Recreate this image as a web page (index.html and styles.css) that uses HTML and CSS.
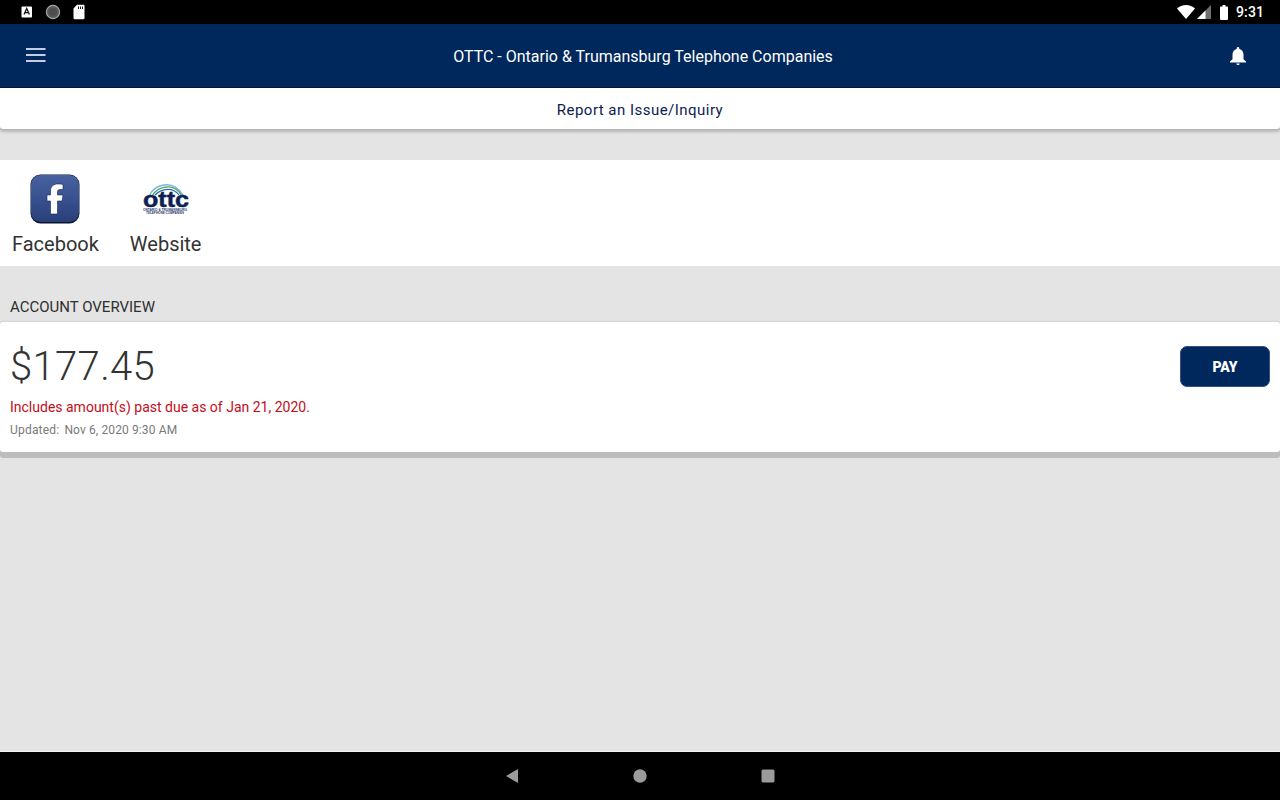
FILE: index.html
```html
<!DOCTYPE html>
<html lang="en">
<head>
<meta charset="utf-8">
<title>OTTC</title>
<link rel="stylesheet" href="styles.css">
</head>
<body>
<div class="screen">
  <div class="statusbar">
    <div class="status-left">
      <svg width="12" height="12" viewBox="0 0 12 12"><rect x="0.5" y="0.5" width="10.5" height="11" rx="1" fill="#fff"/><path d="M3 8.5 5.700 2.500 8.400 8.500M4 6.700h3.400" fill="none" stroke="#111" stroke-width="1.300"/></svg>
      <svg width="16" height="16" viewBox="0 0 16 16"><circle cx="8" cy="8" r="6.600" fill="#595959" stroke="#a8a8a8" stroke-width="1.200"/><circle cx="8" cy="8" r="3.800" fill="#4c4c4c"/></svg>
      <svg width="12" height="16" viewBox="0 0 12 16"><path d="M4 .8h6.500a1 1 0 0 1 1 1V14a1.300 1.300 0 0 1-1.300 1.300H1.800A1.300 1.300 0 0 1 .5 14V4.500Z" fill="#fff"/><path d="M5 2.500h1v2.600H5zM7 2.500h1v2.600H7zM9 2.500h1v2.600H9z" fill="#222"/></svg>
    </div>
    <div class="status-right">
      <svg class="s-wifi" width="18" height="14" viewBox="0 0 18 14"><path d="M0 3.400C2.400 1.300 5.600 0 9 0s6.600 1.300 9 3.400L9 14Z" fill="#fff"/></svg>
      <svg class="s-signal" width="14" height="14" viewBox="0 0 14 14"><path d="M14 0V14H0Z" fill="#6f6f6f"/><path d="M8.500 5.500V14H0Z" fill="#fff"/></svg>
      <svg class="s-batt" width="8" height="15" viewBox="0 0 8 15"><path d="M2.500 0h3v1.500H7a1 1 0 0 1 1 1V14a1 1 0 0 1-1 1H1a1 1 0 0 1-1-1V2.500a1 1 0 0 1 1-1h1.500Z" fill="#fff"/></svg>
      <span class="clock">9:31</span>
    </div>
  </div>

  <header class="appbar">
    <svg class="menu" width="20" height="14" viewBox="0 0 20 14"><path d="M0 1h19.500M0 7h19.500M0 13h19.500" stroke="#c5cde0" stroke-width="2"/></svg>
    <h1 class="title">OTTC - Ontario &amp; Trumansburg Telephone Companies</h1>
    <svg class="bell" width="16" height="18" viewBox="0 0 16 18"><path d="M8 0a1.300 1.300 0 0 1 1.300 1.300v.8C12 2.800 13.500 5 13.500 7.800v4.400L16 14.600v.9H0v-.9l2.500-2.400V7.800C2.500 5 4 2.800 6.700 2.100v-.8A1.300 1.300 0 0 1 8 0ZM6.300 16.400h3.400A1.700 1.700 0 0 1 8 18a1.700 1.700 0 0 1-1.700-1.600Z" fill="#fff"/></svg>
  </header>

  <div class="report">Report an Issue/Inquiry</div>

  <section class="links">
    <div class="link">
      <svg width="50" height="50" viewBox="0 0 50 50">
        <defs><linearGradient id="fbg" x1="0" y1="0" x2="0" y2="1"><stop offset="0" stop-color="#47629f"/><stop offset=".55" stop-color="#36508e"/><stop offset="1" stop-color="#2a3f78"/></linearGradient></defs>
        <rect x=".5" y=".5" width="49" height="49" rx="10" fill="#0d1830"/>
        <rect x="1" y="1" width="48" height="47" rx="9.500" fill="url(#fbg)"/>
        <path d="M20.500 40V27H17V21h3.500V17C20.500 12.500 23.500 10 28 10c2 0 4 .2 5 .4v5.100h-3c-2 0-2.500 1-2.500 2.500v3H33l-1 6h-4.500v13Z" fill="#fff" stroke="#14224d" stroke-width=".6"/>
      </svg>
      <span class="link-label">Facebook</span>
    </div>
    <div class="link link-web">
      <svg width="50" height="50" viewBox="0 0 50 50">
        <path d="M8 22C13 11 31 4 42 21" fill="none" stroke="#7fb2dc" stroke-width="1.300"/>
        <path d="M11 22C17 12 33 8 41 22" fill="none" stroke="#57a86d" stroke-width="1.300"/>
        <path d="M14 21C21 14 32 13 38 21" fill="none" stroke="#2d6fb0" stroke-width="1.200"/>
        <text class="logo-word" x="2" y="33" textLength="46" lengthAdjust="spacingAndGlyphs">ottc</text>
        <text class="logo-small" x="2" y="36.500" textLength="44" lengthAdjust="spacingAndGlyphs">ONTARIO &amp; TRUMANSBURG</text>
        <text class="logo-small" x="5" y="39.500" textLength="38" lengthAdjust="spacingAndGlyphs">TELEPHONE COMPANIES</text>
      </svg>
      <span class="link-label">Website</span>
    </div>
  </section>

  <div class="section-label">ACCOUNT OVERVIEW</div>

  <section class="card">
    <div class="card-main">
      <div class="amount">$177.45</div>
      <div class="pastdue">Includes amount(s) past due as of Jan 21, 2020.</div>
      <div class="updated"><span class="updated-label">Updated:</span><span>Nov 6, 2020 9:30 AM</span></div>
    </div>
    <button class="pay">PAY</button>
  </section>

  <div class="spacer"></div>

  <nav class="navbar">
    <svg width="14" height="14" viewBox="0 0 14 14"><path d="M13 0V14L1 7Z" fill="#9b9b9b"/></svg>
    <svg width="14" height="14" viewBox="0 0 14 14"><circle cx="7" cy="7" r="6.700" fill="#9b9b9b"/></svg>
    <svg width="14" height="14" viewBox="0 0 14 14"><rect x=".5" y=".5" width="13" height="13" rx="1.500" fill="#9b9b9b"/></svg>
  </nav>
</div>
</body>
</html>
```

FILE: styles.css
```css
* { box-sizing: border-box; }
html, body { margin: 0; height: 100%; }
body { font-family: Roboto, "Liberation Sans", sans-serif; background: #e4e4e4; }
.screen { width: 1280px; height: 800px; display: flex; flex-direction: column; overflow: hidden; background: #e4e4e4; }

.statusbar { height: 24px; flex: none; background: #000; display: flex; justify-content: space-between; align-items: center; padding: 0 16px 0 21px; }
.status-left { display: flex; align-items: center; gap: 12px; }
.status-right { display: flex; align-items: center; }
.s-signal { margin-left: 2px; }
.s-batt { margin-left: 9px; }
.clock { color: #fff; font-size: 14px; font-weight: 500; margin-left: 8px; letter-spacing: .1px; }

.appbar { height: 64px; flex: none; background: #00285c; border-bottom: 1px solid #001433; display: flex; align-items: center; padding: 0 34px 0 26px; }
.menu { flex: none; margin-top: -2px; }
.title { flex: 1; margin: 0; padding: 1px 0 0 10px; text-align: center; color: #fff; font-size: 16px; font-weight: 400; }
.bell { flex: none; margin-top: 1px; }

.report { height: 41px; flex: none; padding-top: 2px; background: #fff; display: flex; align-items: center; justify-content: center; color: #0b1c4f; font-size: 15px; letter-spacing: .47px; border-radius: 0 0 3px 3px; box-shadow: 0 1px 0 #b4b4b4, 0 2px 0 #bebebe, 0 3px 3px rgba(0,0,0,.2); }

.links { margin-top: 31px; height: 106px; flex: none; background: #fff; display: flex; padding: 14px 0 0 12px; }
.link { display: flex; flex-direction: column; align-items: center; }
.link-web { margin-left: 31px; }
.link-label { font-size: 20px; line-height: 24px; margin-top: 8px; color: #333; }
.logo-word { font-family: "Liberation Sans", sans-serif; font-size: 22px; font-weight: 700; fill: #0d1f55; stroke: #0d1f55; stroke-width: .5px; }
.logo-small { font-family: "Liberation Sans", sans-serif; font-size: 2.600px; font-weight: 700; fill: #2a3a6c; }

.section-label { margin-top: 33px; padding-left: 10px; height: 23px; flex: none; font-size: 15px; line-height: 16px; color: #2f2f2f; }

.card { height: 130px; flex: none; background: #fff; border-radius: 3px; display: flex; justify-content: space-between; padding: 24px 10px 0; box-shadow: 0 -1px 2px #d2d2d2, 0 6px 0 #bcbcbc; }
.amount { font-size: 40px; font-weight: 300; line-height: 42px; color: #333; letter-spacing: .35px; }
.pastdue { margin-top: 10px; font-size: 14px; line-height: 18px; color: #c40d1a; }
.updated { margin-top: 6px; font-size: 12px; line-height: 16px; color: #7a7a7a; display: flex; gap: 5px; letter-spacing: .12px; }
.updated-label { letter-spacing: .2px; }
.pay { width: 90px; height: 41px; background: #00285c; color: #fff; border: 1px solid #334f80; border-radius: 7px; font-family: Roboto, sans-serif; font-size: 14px; font-weight: 900; }

.spacer { flex: 1; }
.navbar { height: 49px; flex: none; background: #000; border-top: 1px solid #f4f4f4; display: flex; align-items: center; justify-content: center; gap: 114px; }
```
